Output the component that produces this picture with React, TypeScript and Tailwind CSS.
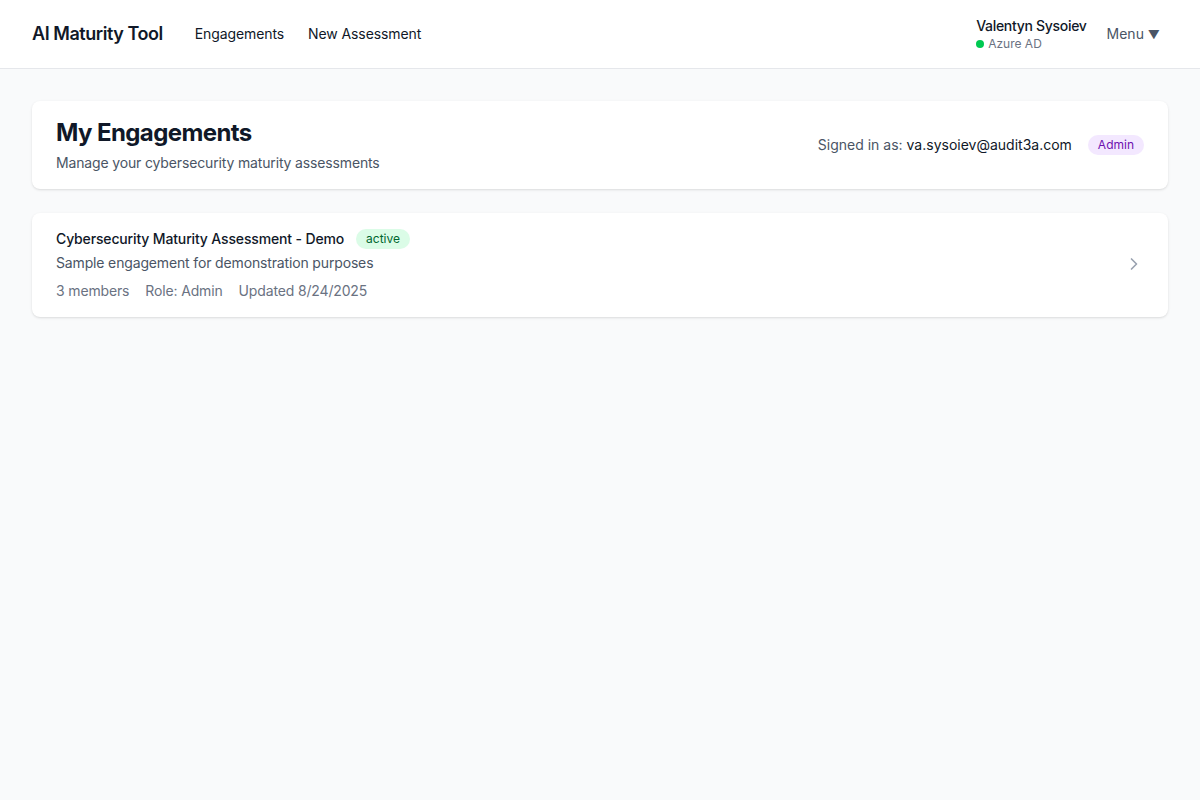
import React from 'react';
import { ChevronRight } from 'lucide-react';

const engagements = [
  {
    id: 1,
    name: 'Cybersecurity Maturity Assessment - Demo',
    status: 'active',
    description: 'Sample engagement for demonstration purposes',
    members: 3,
    role: 'Admin',
    updated: '8/24/2025',
  },
];

const Header: React.FC = () => (
  <header className="bg-white border-b border-gray-200">
    <div className="flex items-center justify-between px-8 py-4">
      <div className="flex items-center">
        <span className="text-lg font-semibold tracking-tight text-gray-900">AI Maturity Tool</span>
        <nav className="flex items-center gap-6 ml-8 text-sm text-gray-900 tracking-[-0.1px]">
          <a href="#">Engagements</a>
          <a href="#">New Assessment</a>
        </nav>
      </div>
      <div className="flex items-center">
        <div className="flex flex-col">
          <span className="text-sm font-medium text-gray-900 tracking-[-0.3px]">Valentyn Sysoiev</span>
          <span className="flex items-center text-xs text-gray-500">
            <span className="w-2 h-2 rounded-full bg-green-500 mr-1"></span>
            Azure AD
          </span>
        </div>
        <button className="ml-3 px-2 text-sm text-gray-600">
          Menu <span className="text-xs">▼</span>
        </button>
      </div>
    </div>
  </header>
);

export default function App() {
  return (
    <div className="min-h-screen bg-gray-50 font-['Inter',sans-serif]">
      <Header />
      <main className="px-8 py-8">
        <div className="bg-white rounded-lg shadow-sm px-6 py-4 flex items-center justify-between">
          <div>
            <h1 className="text-2xl font-bold tracking-tight text-gray-900">My Engagements</h1>
            <p className="mt-1 text-sm text-gray-600 tracking-[-0.15px]">Manage your cybersecurity maturity assessments</p>
          </div>
          <div className="flex items-center text-sm">
            <span className="text-gray-600">Signed in as:</span>
            <span className="ml-1 text-gray-900">va.sysoiev@audit3a.com</span>
            <span className="ml-4 px-2.5 py-0.5 rounded-full bg-purple-100 text-purple-800 text-xs">Admin</span>
          </div>
        </div>

        <div className="mt-6 flex flex-col gap-4">
          {engagements.map((e) => (
            <div
              key={e.id}
              className="bg-white rounded-lg shadow-sm px-6 pt-[14px] pb-4 flex items-center justify-between"
            >
              <div>
                <div className="flex items-center h-6">
                  <span className="text-sm font-medium text-gray-900 tracking-[-0.15px]">{e.name}</span>
                  <span className="ml-3 px-2.5 py-0.5 rounded-full bg-green-100 text-green-800 text-xs">
                    {e.status}
                  </span>
                </div>
                <p className="mt-0.5 text-sm text-gray-600 tracking-[-0.15px]">{e.description}</p>
                <div className="mt-2 flex items-center gap-4 text-sm text-gray-500 tracking-[-0.15px]">
                  <span>{e.members} members</span>
                  <span>Role: {e.role}</span>
                  <span>Updated {e.updated}</span>
                </div>
              </div>
              <ChevronRight className="w-5 h-5 text-gray-400" />
            </div>
          ))}
        </div>
      </main>
    </div>
  );
}
